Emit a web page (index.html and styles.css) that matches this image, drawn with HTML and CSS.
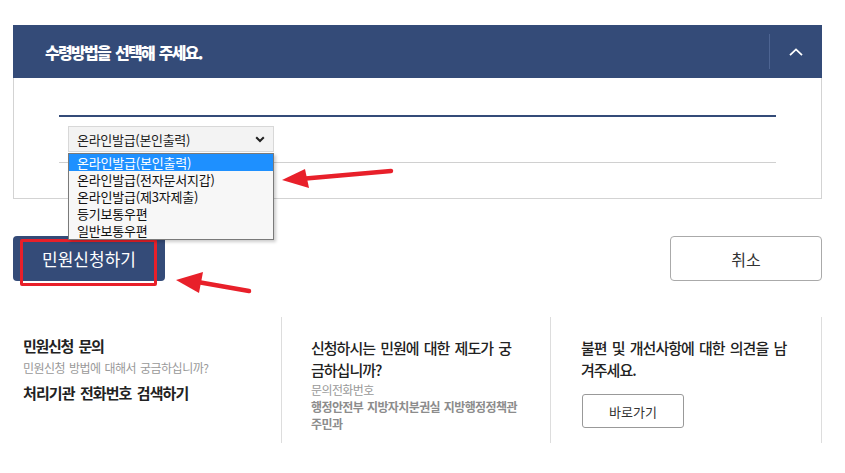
FILE: index.html
```html
<!DOCTYPE html>
<html lang="ko">
<head>
    <meta charset="UTF-8">
    <meta name="viewport" content="width=device-width, initial-scale=1.0">
    <title>수령방법 선택</title>
    <link rel="stylesheet" href="styles.css">
</head>
<body>
    <div class="page">
        <div class="accordion">
            <div class="acc-head">
                <h2>수령방법을 선택해 주세요.</h2>
                <button class="acc-toggle" aria-label="닫기">
                    <svg width="14" height="8" viewBox="0 0 14 8"><path d="M1 7.2 L7 1.4 L13 7.2" fill="none" stroke="#fff" stroke-width="1.8"/></svg>
                </button>
            </div>
            <div class="acc-body">
                <div class="rule-strong"></div>
                <div class="select-wrap">
                    <div class="select">
                        <span>온라인발급(본인출력)</span>
                        <svg width="10" height="7" viewBox="0 0 10 7"><path d="M1.2 1.2 L5 5 L8.8 1.2" fill="none" stroke="#222" stroke-width="2"/></svg>
                    </div>
                    <!-- 펼쳐진 옵션 목록 -->
                    <ul class="options">
                        <li class="selected">온라인발급(본인출력)</li>
                        <li>온라인발급(전자문서지갑)</li>
                        <li>온라인발급(제3자제출)</li>
                        <li>등기보통우편</li>
                        <li>일반보통우편</li>
                    </ul>
                </div>
                <div class="rule-light"></div>
            </div>
        </div>

        <div class="actions">
            <div class="submit-wrap">
                <button class="btn-primary">민원신청하기</button>
                <span class="mark"></span>
            </div>
            <button class="btn-cancel">취소</button>
        </div>

        <div class="info">
            <div class="info-col first">
                <h3>민원신청 문의</h3>
                <p class="sub">민원신청 방법에 대해서 궁금하십니까?</p>
                <p class="link">처리기관 전화번호 검색하기</p>
            </div>
            <div class="info-col">
                <h3 class="wide">신청하시는 민원에 대한 제도가 궁금하십니까?</h3>
                <p class="tel">문의전화번호</p>
                <p class="dept">행정안전부 지방자치분권실 지방행정정책관 주민과</p>
            </div>
            <div class="info-col last">
                <h3 class="wide">불편 및 개선사항에 대한 의견을 남겨주세요.</h3>
                <button class="btn-go">바로가기</button>
            </div>
        </div>

        <!-- 안내 화살표 -->
        <svg class="arrows" width="845" height="473" viewBox="0 0 845 473">
            <line x1="391" y1="171" x2="300" y2="179" stroke="#e8202a" stroke-width="4.5" stroke-linecap="round"/>
            <polygon points="282,180 305,169 309,188" fill="#e8202a"/>
            <line x1="249" y1="291" x2="192" y2="281" stroke="#e8202a" stroke-width="4.5" stroke-linecap="round"/>
            <polygon points="176,280 203,272 199,293" fill="#e8202a"/>
        </svg>
    </div>
</body>
</html>
```

FILE: styles.css
```css
body {
    margin: 0;
    background-color: #fff;
    font-family: "Noto Sans CJK KR", "Noto Sans", sans-serif;
    color: #222;
}

.page {
    position: relative;
    width: 845px;
    height: 473px;
    padding: 25px 23px 0 13px;
    box-sizing: border-box;
    overflow: hidden;
}

/* 아코디언 */
.acc-head {
    display: flex;
    align-items: center;
    justify-content: space-between;
    height: 53px;
    background-color: #344b78;
}

.acc-head h2 {
    margin: 0 0 0 32px;
    font-size: 16px;
    font-weight: 900;
    letter-spacing: -1.7px;
    word-spacing: 2px;
    color: #fff;
}

.acc-toggle {
    display: flex;
    align-items: center;
    justify-content: center;
    width: 53px;
    height: 35px;
    padding: 0;
    border: none;
    border-left: 1px solid #4d6492;
    background: none;
    cursor: pointer;
}

.acc-body {
    padding: 37px 45px 35px;
    border: 1px solid #d3d3d3;
    border-top: none;
}

.rule-strong {
    height: 2px;
    background-color: #344b78;
}

.rule-light {
    height: 1px;
    margin-top: 10px;
    background-color: #d0d0d0;
}

.select-wrap {
    position: relative;
    width: 206px;
    margin: 9px 0 0 9px;
}

.select {
    display: flex;
    align-items: center;
    justify-content: space-between;
    height: 26px;
    padding: 0 8px;
    border: 1px solid #d8d8d8;
    background-color: #f3f3f3;
    font-size: 13px;
    letter-spacing: -0.3px;
    box-sizing: border-box;
}

.options {
    position: absolute;
    top: 27px;
    left: 0;
    z-index: 2;
    width: 206px;
    margin: 0;
    padding: 0;
    list-style: none;
    border: 1px solid #7a7a7a;
    background-color: #f7f7f7;
    box-shadow: 2px 2px 3px rgba(0,0,0,0.2);
    box-sizing: border-box;
}

.options li {
    height: 17px;
    padding-left: 8px;
    font-size: 13px;
    line-height: 17px;
    letter-spacing: -0.2px;
    color: #111;
}

.options li.selected {
    background-color: #1e90ff;
    color: #fff;
}

/* 버튼 */
.actions {
    display: flex;
    justify-content: space-between;
    margin-top: 37px;
}

.submit-wrap {
    position: relative;
}

.btn-primary,
.btn-cancel {
    width: 152px;
    height: 45px;
    border-radius: 4px;
    font-family: inherit;
    font-size: 16px;
    cursor: pointer;
}

.btn-primary {
    border: none;
    background-color: #344b78;
    color: #fff;
    font-size: 17px;
}

.btn-cancel {
    border: 1px solid #aaa;
    background-color: #fff;
    color: #333;
}

/* 강조 표시 */
.mark {
    position: absolute;
    left: 7px;
    top: 3px;
    width: 137px;
    height: 47px;
    border: 3px solid #e8202a;
    border-radius: 2px;
    box-sizing: border-box;
    pointer-events: none;
}

/* 하단 안내 */
.info {
    display: grid;
    grid-template-columns: 269px 269px 271px;
    height: 126px;
    margin-top: 36px;
}

.info-col {
    padding: 20px 28px 0 29px;
    border-right: 1px solid #ddd;
}

.info-col.first {
    padding: 19px 10px 0;
}

.info-col.last {
    padding-left: 30px;
}

.info h3 {
    margin: 0;
    font-size: 15px;
    font-weight: bold;
    line-height: 20px;
    letter-spacing: -1.3px;
    word-spacing: 2.5px;
    color: #222;
}

.info h3.wide {
    line-height: 22px;
    font-weight: 500;
    letter-spacing: -1px;
    word-spacing: 2px;
}

.sub {
    margin: 3px 0 0;
    font-size: 12px;
    line-height: 18px;
    letter-spacing: -0.5px;
    word-spacing: 1px;
    color: #999;
}

.link {
    margin: 6px 0 0;
    font-size: 15px;
    font-weight: bold;
    line-height: 20px;
    letter-spacing: -0.9px;
    word-spacing: 2px;
    color: #222;
}

.tel,
.dept {
    margin: 0;
    font-size: 12px;
    line-height: 17px;
    letter-spacing: -0.6px;
    word-spacing: 1px;
    color: #999;
}

.dept {
    font-weight: bold;
    color: #8c8c8c;
}

.btn-go {
    width: 102px;
    height: 34px;
    margin: 13px 0 0 1px;
    border: 1px solid #999;
    border-radius: 3px;
    background-color: #fff;
    font-family: inherit;
    font-size: 13px;
    color: #333;
    cursor: pointer;
}

.arrows {
    position: absolute;
    left: 0;
    top: 0;
    z-index: 3;
    pointer-events: none;
}
```
